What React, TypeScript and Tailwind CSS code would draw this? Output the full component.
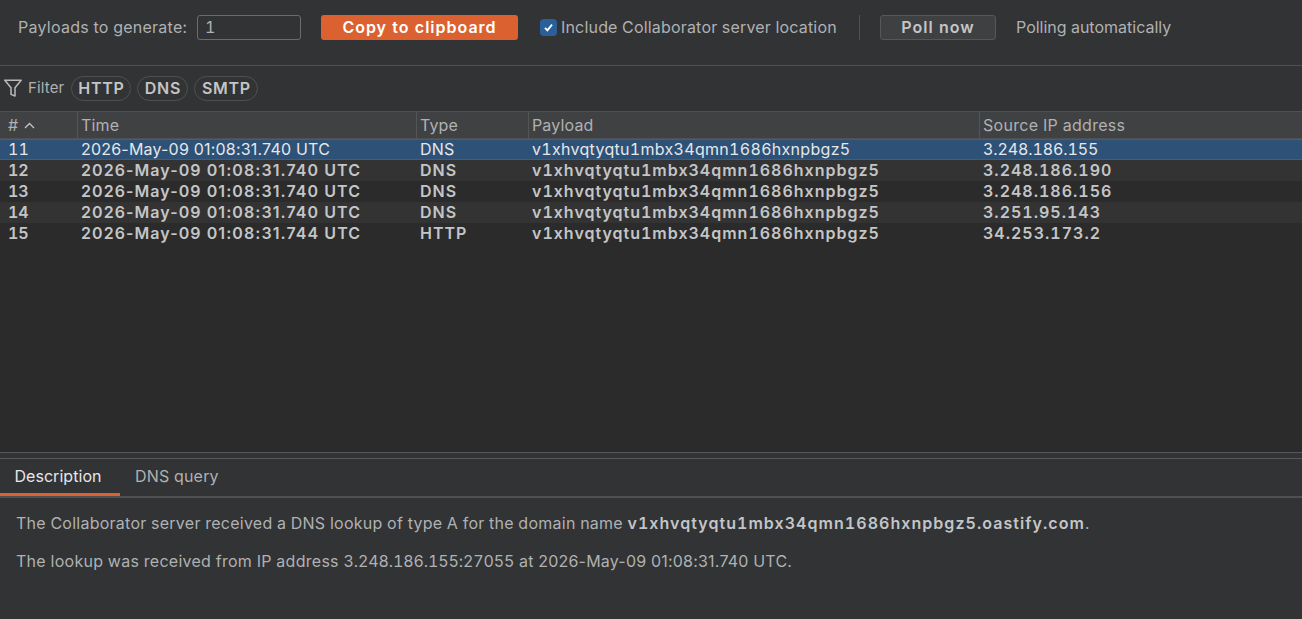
import React from "react";

const rows = [
  ["11", "2026-May-09 01:08:31.740 UTC", "DNS", "3.248.186.155"],
  ["12", "2026-May-09 01:08:31.740 UTC", "DNS", "3.248.186.190"],
  ["13", "2026-May-09 01:08:31.740 UTC", "DNS", "3.248.186.156"],
  ["14", "2026-May-09 01:08:31.740 UTC", "DNS", "3.251.95.143"],
  ["15", "2026-May-09 01:08:31.744 UTC", "HTTP", "34.253.173.2"],
];
const payload = "v1xhvqtyqtu1mbx34qmn1686hxnpbgz5";

function Pill({ children, width }: { children: React.ReactNode; width: string }) {
  return (
    <span className={`${width} h-[25px] flex items-center justify-center rounded-full border border-[#4e5052] font-semibold text-[#c4c5c6] tracking-[0.7px]`}>
      {children}
    </span>
  );
}

export default function App() {
  return (
    <div className="w-[1302px] h-[619px] overflow-hidden flex flex-col bg-[#313335] text-[16px] leading-[20px] tracking-[0.15px] tabular-nums text-[#b0b1b2] font-['Inter',sans-serif]">
      <div className="h-[66px] shrink-0 border-b border-[#4e5052] flex items-start pt-[15px] pl-[18px]">
        <span className="h-[25px] pb-[2px] flex items-center w-[179px] tracking-[0.25px]">Payloads to generate:</span>
        <div className="w-[104px] h-[25px] rounded-[3px] border border-[#6a6c6e] pl-[7px] pb-[2px] flex items-center">1</div>
        <button className="ml-[20px] w-[197px] h-[25px] pb-[2px] rounded-[3px] bg-[#db6230] text-white font-semibold tracking-[1px] flex items-center justify-center">
          Copy to clipboard
        </button>
        <span className="ml-[22px] w-[17px] h-[17px] mt-[4px] rounded-[4px] bg-[#2a6099] flex items-center justify-center">
          <svg width="11" height="11" viewBox="0 0 11 11" fill="none" stroke="#fff" strokeWidth="1.8">
            <path d="M2 5.8 L4.4 8.3 L9 2.6" />
          </svg>
        </span>
        <span className="ml-[4px] h-[25px] pb-[2px] flex items-center w-[277px] whitespace-nowrap tracking-[0.18px]">Include Collaborator server location</span>
        <span className="ml-[21px] w-px h-[25px] bg-[#4e5052]" />
        <button className="ml-[20px] w-[116px] h-[25px] pb-[2px] rounded-[3px] bg-[#3f4042] border border-[#55575a] font-semibold tracking-[1px] text-[#c4c5c6] flex items-center justify-center">
          Poll now
        </button>
        <span className="ml-[20px] h-[25px] pb-[2px] flex items-center tracking-normal">Polling automatically</span>
      </div>

      <div className="h-[45px] shrink-0 flex items-center gap-[6px] pl-[4px] pb-[1px]">
        <svg width="18" height="18" viewBox="0 0 18 18" fill="none" stroke="#b9babb" strokeWidth="1.5" strokeLinejoin="round">
          <path d="M0.8 1.2 H17.2 L11 8.8 V17 L7 15.4 V8.8 Z" />
        </svg>
        <span className="text-[15px] mr-[1px]">Filter</span>
        <Pill width="w-[60px]">HTTP</Pill>
        <Pill width="w-[51px]">DNS</Pill>
        <Pill width="w-[64px]">SMTP</Pill>
      </div>

      <div className="h-[341px] shrink-0 bg-[#2b2b2b] flex flex-col">
        <div className="h-[28px] shrink-0 bg-[#404143] border-t border-b border-[#4e5052] grid grid-cols-[77px_339px_112px_451px_1fr]">
          <div className="pl-[8px] flex items-center gap-[6px]">
            #
            <svg width="11" height="7" viewBox="0 0 11 7" fill="none" stroke="#c4c5c6" strokeWidth="1.3"><path d="M1 6 L5.5 1.5 L10 6" /></svg>
          </div>
          <div className="pl-[3px] border-l border-[#545557] flex items-center">Time</div>
          <div className="pl-[3px] border-l border-[#545557] flex items-center">Type</div>
          <div className="pl-[3px] border-l border-[#545557] flex items-center">Payload</div>
          <div className="pl-[3px] border-l border-[#545557] flex items-center tracking-[0.3px]">Source IP address</div>
        </div>
        {rows.map((r, i) => {
          const selected = i === 0;
          return (
            <div
              key={r[0]}
              className={
                selected
                  ? "h-[21px] leading-[17px] shrink-0 grid grid-cols-[77px_339px_112px_451px_1fr] items-center bg-[#2d5177] border-y border-[#2f6296] text-[#e6e7e8]"
                  : i % 2 === 1
                    ? "h-[21px] pb-[2px] shrink-0 grid grid-cols-[77px_339px_112px_451px_1fr] items-center bg-[#333333] font-semibold tracking-[1px] text-[#c4c5c6]"
                    : "h-[21px] pb-[2px] shrink-0 grid grid-cols-[77px_339px_112px_451px_1fr] items-center bg-[#2b2b2b] font-semibold tracking-[1px] text-[#c4c5c6]"
              }
            >
              <div className="pl-[8px] tracking-normal">{r[0]}</div>
              <div className={selected ? "pl-[4px] whitespace-nowrap proportional-nums tracking-[0.2px]" : "pl-[4px] whitespace-nowrap proportional-nums tracking-[1.07px]"}>{r[1]}</div>
              <div className="pl-[4px]">{r[2]}</div>
              <div className={selected ? "pl-[4px] tracking-[0.3px]" : "pl-[4px]"}>{payload}</div>
              <div className={selected ? "pl-[4px] tracking-[-0.1px]" : "pl-[4px]"}>{r[3]}</div>
            </div>
          );
        })}
      </div>

      <div className="h-[7px] shrink-0 bg-[#313335] border-y border-[#56585a]" />

      <div className="h-[39px] shrink-0 flex border-b-2 border-[#4e5052]">
        <div className="w-[120px] h-[37px] pb-[1px] pr-[4px] flex items-center justify-center text-[#e6e7e8] tracking-[0.05px] border-b-[3px] border-[#db6230]">Description</div>
        <div className="ml-[15px] h-[37px] pb-[3px] flex items-center tracking-[0.2px]">DNS query</div>
      </div>

      <div className="pl-[16px] pt-[15px]">
        <p className="h-[20px] whitespace-nowrap tracking-[0.25px]">
          The Collaborator server received a DNS lookup of type A for the domain name{" "}
          <span className="font-semibold tracking-[1.05px] text-[#c4c5c6]">{payload}.oastify.com</span>.
        </p>
        <p className="h-[20px] mt-[18px] whitespace-nowrap tracking-[0.275px]">
          The lookup was received from IP address <span className="tracking-[-0.1px]">3.248.186.155:27055</span> at{" "}
          <span className="proportional-nums tracking-[0.2px]">2026-May-09 01:08:31.740 UTC.</span>
        </p>
      </div>
    </div>
  );
}
